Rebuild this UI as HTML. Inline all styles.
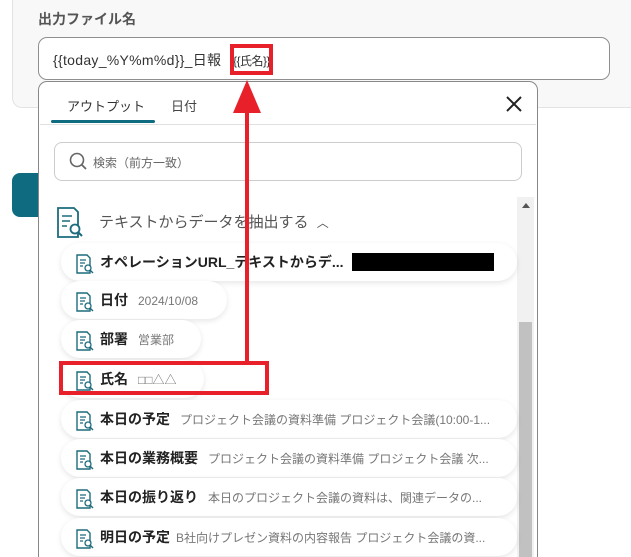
<!DOCTYPE html>
<html><head><meta charset="utf-8"><style>
*{box-sizing:border-box;margin:0;padding:0}
html,body{width:631px;height:557px;overflow:hidden}
body{background:#fff;position:relative;font-family:"Liberation Sans","Noto Sans CJK JP",sans-serif}
.abs{position:absolute}
.panel{left:12px;top:-10px;width:640px;height:118px;background:#f8f8f8;border:1px solid #e3e3e3;border-radius:10px}
.lbl{left:38px;top:9px;font-size:14px;font-weight:bold;color:#555}
.inp{left:38px;top:37px;width:572px;height:43px;border:1px solid #8f8f8f;border-radius:9px;background:#fff}
.itx{font-size:14px;color:#333;top:50px}
.btn{left:12px;top:173px;width:40px;height:44px;background:#0e6b80;border-radius:8px}
.dd{left:38px;top:81px;width:500px;height:476px;border:1px solid #888;border-bottom:none;border-radius:9px 9px 0 0;background:#fff}
.tab{font-size:13px;color:#333}
.x{left:505px;top:95px}
.search{left:54px;top:142px;width:468px;height:39px;border:1px solid #ccc;border-radius:8px;font-size:12px;color:#666;padding:11px 0 0 38px}
.track{left:517px;top:197px;width:17px;height:360px;background:#f1f1f1}
.thumb{left:519px;top:322px;width:13px;height:235px;background:#c1c1c1}
.sect{left:99px;top:211px;font-size:15px;color:#555}
.pill{position:absolute;left:61px;height:38px;border-radius:19px;background:#fff;box-shadow:0 2px 6px rgba(0,0,0,.1);font-size:14px;font-weight:bold;color:#222;padding:0 0 0 39px;line-height:38px;white-space:nowrap;overflow:hidden}
.pill small{font-size:12px;font-weight:normal;color:#777;margin-left:10px}
.pill svg{position:absolute;left:15px;top:11px}
.red{border:4px solid #e8202a}
</style></head><body>
<div class="abs panel"></div>
<div class="abs lbl">出力ファイル名</div>
<div class="abs inp"></div>
<div class="abs itx" style="left:53px;letter-spacing:0.3px">{{today_%Y%m%d}}_日報</div>
<div class="abs itx" style="left:233px;font-size:12px;top:52px;letter-spacing:-0.5px">{{氏名}}</div>
<div class="abs btn"></div>
<div class="abs dd"></div>
<div class="abs tab" style="left:67px;top:96px">アウトプット</div>
<div class="abs tab" style="left:171px;top:96px;color:#444">日付</div>
<div class="abs" style="left:51px;top:120px;width:104px;height:3px;background:#0e6b80;border-radius:2px"></div>
<div class="abs" style="left:40px;top:124px;width:496px;height:1px;background:#e0e0e0"></div>
<svg class="abs x" width="18" height="18" viewBox="0 0 18 18"><path d="M2 2L16 16M16 2L2 16" stroke="#222" stroke-width="2"/></svg>
<div class="abs search">検索（前方一致）</div>
<svg class="abs" style="left:69px;top:152px" width="20" height="20" viewBox="0 0 20 20"><circle cx="8" cy="8" r="6.5" fill="none" stroke="#666" stroke-width="1.6"/><path d="M12.5 12.5L17 17" stroke="#666" stroke-width="1.8"/></svg>
<div class="abs track"></div><div class="abs thumb"></div>
<div class="abs" style="left:522px;top:203px;width:0;height:0;border-left:4px solid transparent;border-right:4px solid transparent;border-bottom:5px solid #555"></div>
<svg class="abs" style="left:56px;top:207px" width="30" height="32" viewBox="0 0 30 32"><path d="M2 1H18L22 5V30H2Z" fill="none" stroke="#1d6b7d" stroke-width="1.8"/><path d="M6 9H16M6 14H14M6 19H11" stroke="#1d6b7d" stroke-width="1.6"/><circle cx="19" cy="22" r="4.5" fill="#fff" stroke="#1d6b7d" stroke-width="1.8"/><path d="M22 25L26 29" stroke="#1d6b7d" stroke-width="2"/></svg>
<div class="abs sect">テキストからデータを抽出する <span style="font-size:12px;margin-left:4px">︿</span></div>
<div class="pill" style="top:243px;width:456px">オペレーションURL_テキストからデ...</div>
<div class="abs" style="left:352px;top:253px;width:142px;height:18px;background:#000"></div>
<div class="pill" style="top:281px;width:166px">日付<small>2024/10/08</small></div>
<div class="pill" style="top:320px;width:140px">部署<small>営業部</small></div>
<div class="pill" style="top:360px;width:143px">氏名<small>□□△△</small></div>
<div class="pill" style="top:400px;width:456px">本日の予定<small>プロジェクト会議の資料準備 プロジェクト会議(10:00-1...</small></div>
<div class="pill" style="top:439px;width:456px">本日の業務概要<small>プロジェクト会議の資料準備 プロジェクト会議 次...</small></div>
<div class="pill" style="top:478px;width:456px">本日の振り返り<small>本日のプロジェクト会議の資料は、関連データの...</small></div>
<div class="pill" style="top:518px;width:456px">明日の予定<small style="margin-left:6px">B社向けプレゼン資料の内容報告 プロジェクト会議の資...</small></div>
<script>
document.querySelectorAll('.pill').forEach(p=>{p.insertAdjacentHTML('afterbegin','<svg width="18" height="20" viewBox="0 0 18 20"><path d="M1 1H11L14 4V19H1Z" fill="none" stroke="#1d6b7d" stroke-width="1.4"/><path d="M4 6H10M4 9H9M4 12H7" stroke="#1d6b7d" stroke-width="1.2"/><circle cx="12" cy="14" r="3" fill="#fff" stroke="#1d6b7d" stroke-width="1.3"/><path d="M14 16L17 19" stroke="#1d6b7d" stroke-width="1.4"/></svg>')});
</script>
<div class="abs red" style="left:230px;top:44px;width:43px;height:31px"></div>
<div class="abs red" style="left:59px;top:361px;width:210px;height:34px"></div>
<div class="abs" style="left:245px;top:110px;width:4px;height:253px;background:#e8202a"></div>
<div class="abs" style="left:233px;top:80px;width:0;height:0;border-left:14px solid transparent;border-right:14px solid transparent;border-bottom:33px solid #e8202a"></div>
</body></html>
